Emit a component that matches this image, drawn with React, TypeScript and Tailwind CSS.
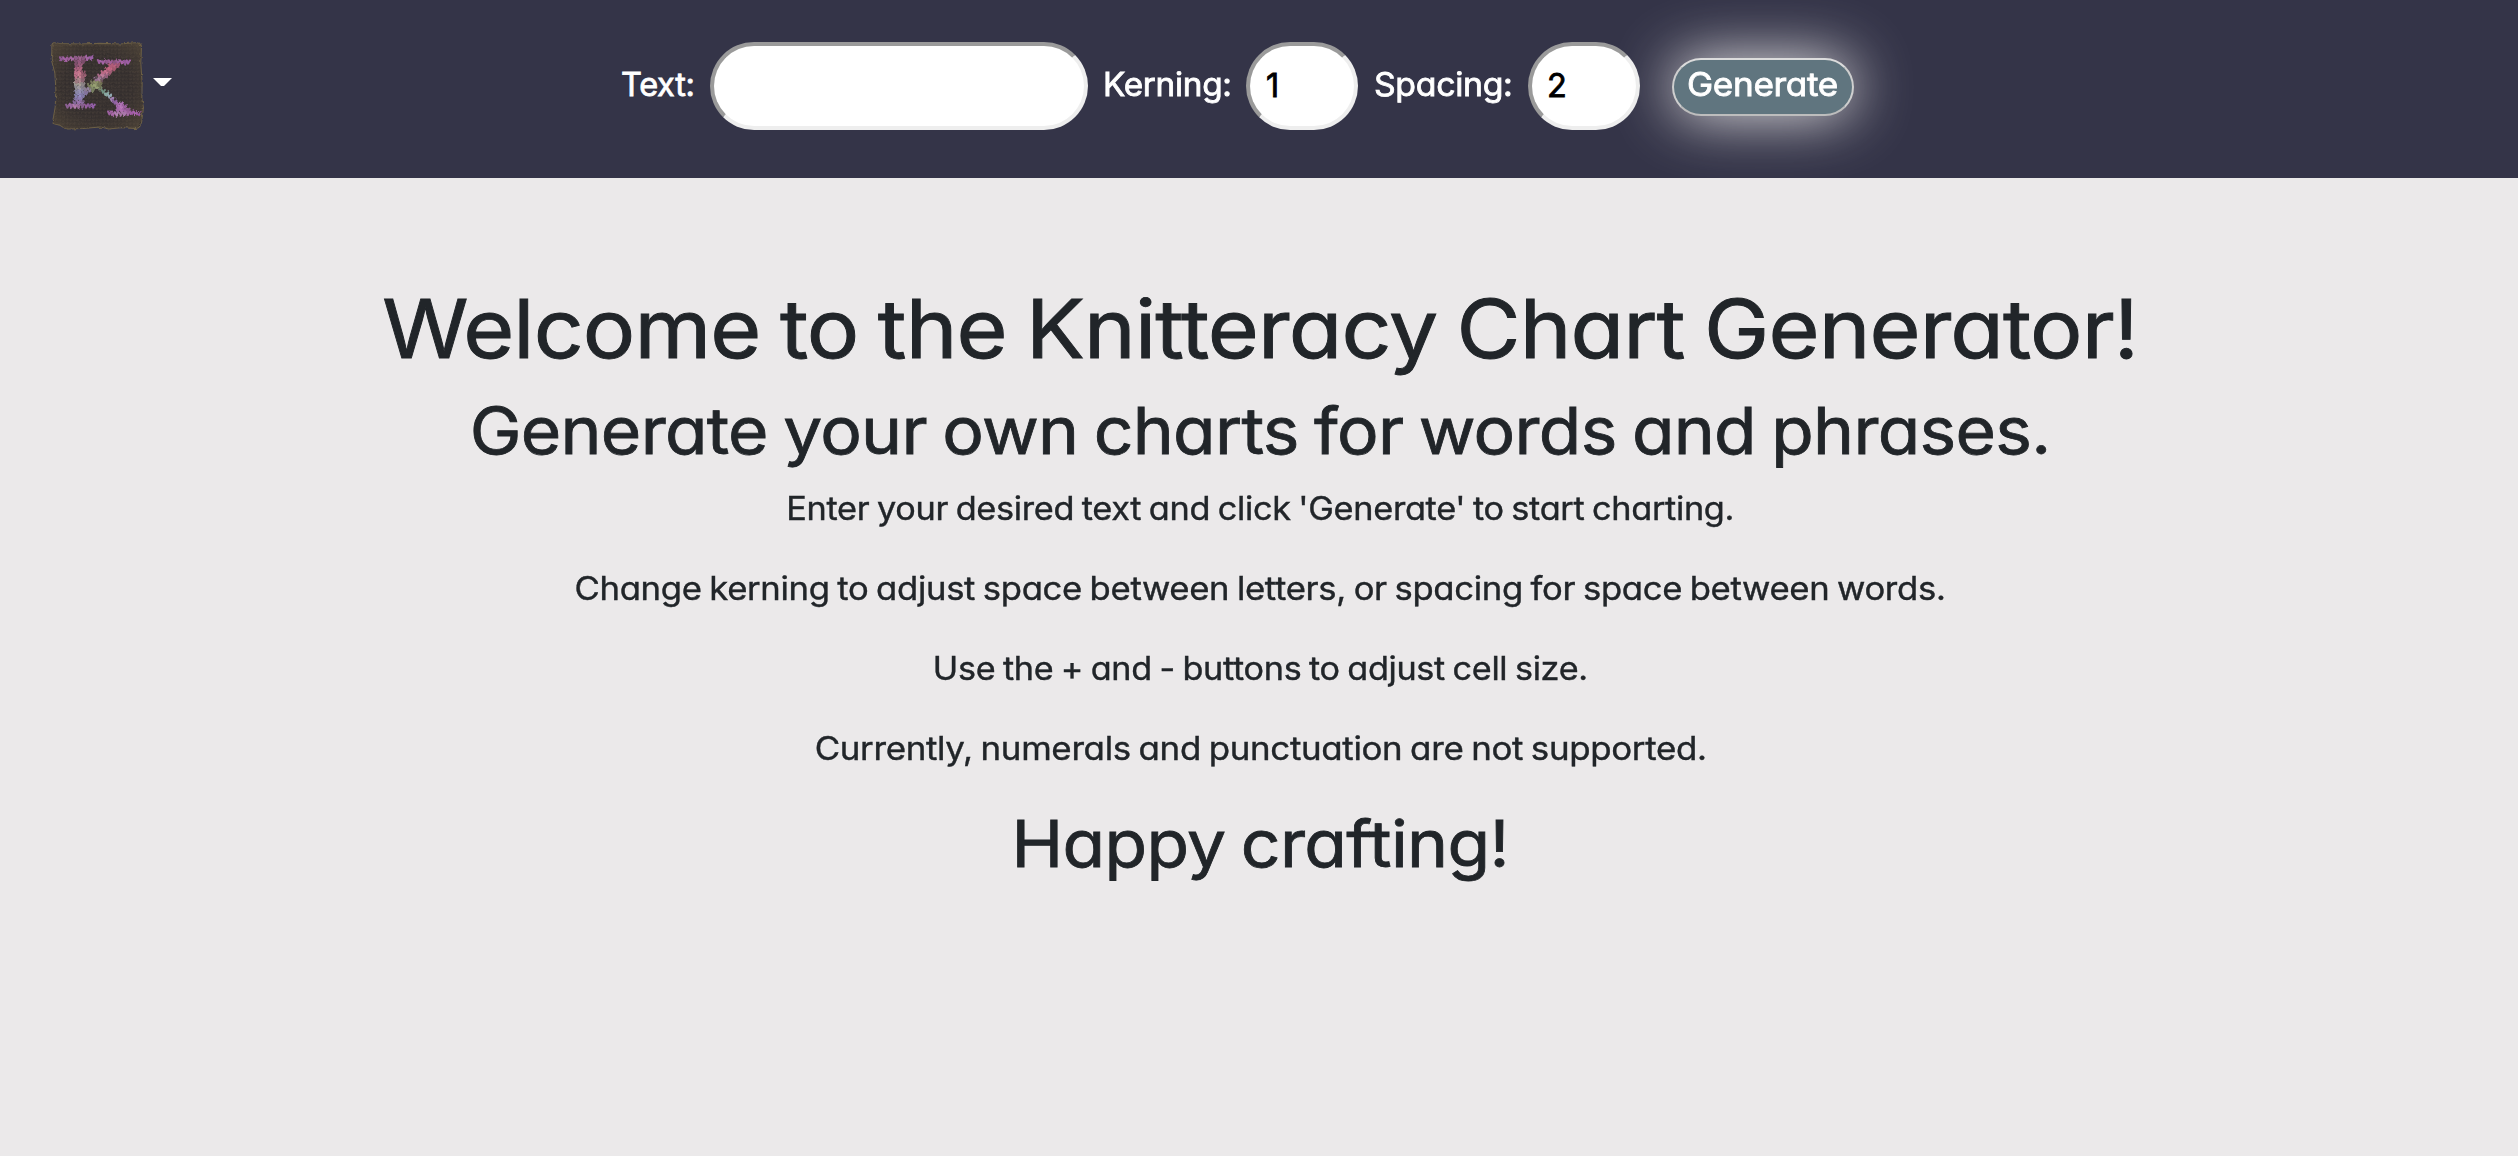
const CV11 = "[font-feature-settings:'cv11']";

type Stitch = [number, number, string];

/* Coloured stitches of the K: x, y, yarn colour */
const stitches: Stitch[] = [
  // upper left serif
  [60, 82, "#8f5a94"], [71, 84, "#a562a6"], [82, 83, "#9a5c98"], [93, 82, "#a468a0"],
  [104, 80, "#8d5a86"], [115, 80, "#9d628f"], [126, 80, "#8a587f"], [137, 80, "#a266a4"], [147, 79, "#9a5fa6"],
  // stem
  [104, 91, "#7d4f6c"], [115, 91, "#94597e"], [125, 91, "#7b4d6a"],
  [105, 102, "#86506f"], [116, 102, "#9b5c7c"],
  [104, 113, "#a8607c"], [115, 113, "#b06580"],
  [105, 124, "#c0708a"], [116, 124, "#c8788c"], [124, 124, "#8d5468"],
  [104, 135, "#bb7088"], [115, 135, "#cc8496"], [124, 135, "#9a6072"],
  [105, 147, "#9c7a80"], [115, 147, "#b08890"], [123, 147, "#8c6674"],
  [104, 158, "#9c9690"], [115, 158, "#a8a098"], [124, 158, "#8c8486"],
  [105, 169, "#8f8c92"], [115, 169, "#a29ca4"], [124, 169, "#86828e"],
  [105, 180, "#8a86a8"], [115, 180, "#9690b4"], [125, 180, "#8884a4"],
  [104, 191, "#8680ac"], [115, 191, "#948cc0"], [125, 191, "#8078a4"],
  [105, 202, "#8474a4"], [115, 202, "#8e7cb0"],
  [100, 212, "#86689c"], [111, 212, "#9a74ac"], [121, 212, "#8a6a9c"],
  // lower left serif
  [78, 222, "#8c6094"], [89, 222, "#9a68a0"], [100, 223, "#b07cac"], [111, 223, "#9c6c9c"],
  [122, 222, "#86608c"], [133, 222, "#985fa0"], [144, 221, "#8a5a98"], [154, 222, "#945fa8"],
  // upper right serif
  [172, 90, "#9a5c9c"], [183, 92, "#a263a4"], [194, 91, "#94598f"], [205, 92, "#a05f98"],
  [216, 93, "#8c5580"], [227, 92, "#9e6098"], [238, 91, "#a662a6"], [249, 92, "#94589a"], [257, 92, "#9d5fa4"],
  // upper arm
  [205, 103, "#b05c78"], [216, 103, "#b8607e"], [227, 102, "#a05674"],
  [194, 113, "#b8607c"], [205, 113, "#c46884"], [216, 112, "#a4586e"],
  [183, 123, "#b86884"], [194, 123, "#c87490"], [204, 122, "#a05c74"],
  [173, 133, "#a86a88"], [183, 133, "#bc7c98"], [193, 132, "#94607c"],
  [162, 143, "#947090"], [172, 143, "#a6809c"], [182, 142, "#7c5c70"],
  [152, 153, "#78785c"], [162, 154, "#8c9068"], [172, 153, "#80785c"],
  [143, 163, "#74785c"], [153, 164, "#8c9668"], [163, 164, "#98a074"], [173, 162, "#707454"],
  [133, 173, "#8c7c94"], [144, 174, "#9484a0"], [153, 174, "#788060"],
  [133, 184, "#84749c"],
  // lower leg
  [174, 172, "#78846c"], [184, 179, "#709080"],
  [194, 186, "#88a8a0"], [202, 192, "#90a8b0"], [209, 202, "#a080b0"], [218, 210, "#8c60a0"],
  [227, 216, "#a068a8"], [237, 215, "#ac70b4"],
  [228, 226, "#a868b0"], [238, 226, "#b878b8"], [247, 224, "#9c60a0"],
  [227, 235, "#a468a8"], [238, 235, "#b070b0"], [248, 235, "#a464a8"], [257, 234, "#945c94"],
  // lower right serif
  [202, 242, "#9a5f9e"], [213, 244, "#a868a8"], [224, 246, "#b080b0"], [235, 246, "#a874a4"],
  [246, 245, "#ac78ac"], [257, 244, "#a468a4"], [268, 242, "#a05ca4"], [279, 244, "#ac64b0"], [289, 245, "#9c5aa4"],
];

function KnittedLogo() {
  return (
    <svg viewBox="33 32 280 272" className="h-[92px] w-[95px]" aria-label="Knitteracy">
      <defs>
        <pattern id="knit" width="11" height="11" patternUnits="userSpaceOnUse">
          <rect width="11" height="11" fill="#352f2e" />
          <path d="M1 1 L5.5 7 L10 1" fill="none" stroke="#413935" strokeWidth="3.4" />
          <path d="M0 0 V11" stroke="#2d2828" strokeWidth="1.5" />
        </pattern>
        <filter id="fuzz" x="-5%" y="-5%" width="110%" height="110%" colorInterpolationFilters="sRGB">
          <feTurbulence type="fractalNoise" baseFrequency="0.09" numOctaves="2" seed="4" result="n" />
          <feDisplacementMap in="SourceGraphic" in2="n" scale="9" xChannelSelector="R" yChannelSelector="G" />
          <feGaussianBlur stdDeviation="1" />
        </filter>
        <radialGradient id="shade" cx="50%" cy="50%" r="72%">
          <stop offset="0.5" stopColor="#5a4d3c" stopOpacity="0" />
          <stop offset="1" stopColor="#6b5c42" stopOpacity="0.5" />
        </radialGradient>
      </defs>
      <g filter="url(#fuzz)">
        <path
          d="M40 42 Q46 38 60 42 L120 44 L180 42 L240 44 L285 40 Q303 40 303 52 L301 100 L305 160 L304 205 L309 232 L305 262 Q304 290 288 294 L245 291 L210 295 L180 289 L130 294 L85 295 Q70 292 62 284 L45 280 Q36 276 42 264 L48 230 L50 180 L47 130 L36 88 Q39 66 38 50 Z"
          fill="url(#knit)"
          stroke="#6e6146"
          strokeWidth="3"
        />
        <path
          d="M40 42 L120 44 L180 42 L240 44 L303 42 L301 100 L305 160 L304 205 L309 232 L305 262 L290 293 L210 295 L180 289 L85 295 L42 278 L48 230 L50 180 L47 130 L36 88 Z"
          fill="url(#shade)"
        />
        {stitches.map(([x, y, c], i) => (
          <path
            key={i}
            d={`M${x + 2} ${y + 1} L${x + 6} ${y + 10} L${x + 11} ${y + 1}`}
            fill="none"
            stroke={c}
            strokeWidth="6"
            strokeLinejoin="round"
            strokeLinecap="round"
          />
        ))}
      </g>
    </svg>
  );
}

const field =
  "h-[88px] rounded-[44px] border-4 border-t-[#9a9a9a] border-l-[#9a9a9a] border-r-[#eeeeee] border-b-[#eeeeee] bg-white pb-0.5 text-[32.5px] text-black outline-none";
const label = "pb-[3px] whitespace-nowrap leading-[48px]";
const wide = "inline-block origin-left tracking-[-0.3px]";

export default function App() {
  return (
    <div className={`min-h-screen bg-[#ebe9ea] font-['Inter',sans-serif] text-[#212529] ${CV11}`}>
      <nav className="flex h-[178px] items-start overflow-hidden bg-[#343448] text-[32.5px] text-white [-webkit-text-stroke-width:0.8px]">
        <div className="flex w-[620px] shrink-0 items-center pt-10 pl-[50px]">
          <KnittedLogo />
          <svg viewBox="0 0 19 8" className="-mt-2 ml-2 h-2 w-[19px]">
            <path d="M0 0 H19 L11 8 H8 Z" fill="#fff" />
          </svg>
        </div>
        <form className="flex items-center pt-[42px]" onSubmit={(e) => e.preventDefault()}>
          <label htmlFor="text" className={`${label} w-[90px] pl-px`}>
            <span className={wide}>Text:</span>
          </label>
          <input id="text" className={`${field} w-[378px] px-4`} />
          <label htmlFor="kerning" className={`${label} w-[158px] pl-[14.5px]`}>
            <span className={`${wide} scale-x-[1.025]`}>Kerning:</span>
          </label>
          <input id="kerning" defaultValue="1" className={`${field} w-[112px] pl-4`} />
          <label htmlFor="spacing" className={`${label} w-[170px] pl-4`}>
            <span className={`${wide} scale-x-[1.04]`}>Spacing:</span>
          </label>
          <input id="spacing" defaultValue="2" className={`${field} w-[112px] pl-[15px]`} />
          <button className="mt-[2px] ml-8 h-[58px] w-[182px] rounded-[29px] border-2 border-t-[#dcdcdc] border-r-[#cfcfcf] border-b-[#bdbdbd] border-l-[#cfcfcf] bg-[#60757f] pb-[5px] pl-[13px] text-left leading-[48px] shadow-[0_0_60px_#ebe9ea]">
            <span className={`${wide} scale-x-[1.08]`}>Generate</span>
          </button>
        </form>
      </nav>
      <main className="flex flex-col items-center pt-[103px] pl-[3px] whitespace-nowrap [word-spacing:-0.05em]">
        <h1 className="mb-[15px] scale-x-[1.081] text-[81px] leading-[96px] tracking-[-0.8px] [word-spacing:-0.05em] [-webkit-text-stroke-width:0.9px]">
          Welcome to the Knitteracy Chart Generator!
        </h1>
        <h2 className="mb-[16px] scale-x-[1.068] text-[65px] leading-[77px] tracking-[-0.65px] [word-spacing:-0.05em] [-webkit-text-stroke-width:0.8px]">
          Generate your own charts for words and phrases.
        </h2>
        <div className="flex flex-col items-center gap-8 text-[32.5px] leading-[48px] tracking-[-0.3px] [word-spacing:-0.05em] [-webkit-text-stroke-width:0.4px]">
          <p className="scale-x-[1.055]">Enter your desired text and click 'Generate' to start charting.</p>
          <p className="scale-x-[1.066]">Change kerning to adjust space between letters, or spacing for space between words.</p>
          <p className="scale-x-[1.052]">Use the + and - buttons to adjust cell size.</p>
          <p className="scale-x-[1.073]">Currently, numerals and punctuation are not supported.</p>
        </div>
        <h2 className="mt-8 scale-x-[1.071] text-[65px] leading-[77px] tracking-[-0.65px] [word-spacing:-0.05em] [-webkit-text-stroke-width:0.8px]">
          Happy crafting!
        </h2>
      </main>
    </div>
  );
}
